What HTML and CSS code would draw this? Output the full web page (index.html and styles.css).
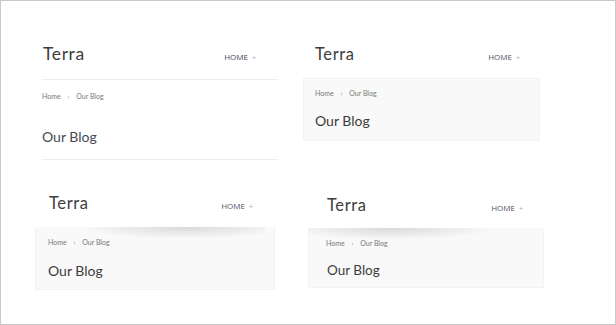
FILE: index.html
```html
<!DOCTYPE html>
<html lang="en">
<head>
    <meta charset="UTF-8">
    <meta name="viewport" content="width=device-width, initial-scale=1.0">
    <title>Terra - Page Title Styles</title>
    <link rel="stylesheet" href="styles.css">
</head>
<body>
    <div class="frame">
        <!-- style 1: plain with lines -->
        <div class="panel panel-lines">
            <div class="header">
                <span class="logo">Terra</span>
                <span class="nav">HOME <span class="plus">+</span></span>
            </div>
            <div class="title-box">
                <div class="crumbs">Home <span class="sep">›</span> Our Blog</div>
                <h2 class="page-title">Our Blog</h2>
            </div>
        </div>

        <!-- style 2: grey box -->
        <div class="panel panel-box">
            <div class="header">
                <span class="logo">Terra</span>
                <span class="nav">HOME <span class="plus">+</span></span>
            </div>
            <div class="title-box">
                <div class="crumbs">Home <span class="sep">›</span> Our Blog</div>
                <h2 class="page-title">Our Blog</h2>
            </div>
        </div>

        <!-- style 3: grey box, shadow right -->
        <div class="panel panel-shadow-r">
            <div class="header">
                <span class="logo">Terra</span>
                <span class="nav">HOME <span class="plus">+</span></span>
            </div>
            <div class="title-box">
                <div class="crumbs">Home <span class="sep">›</span> Our Blog</div>
                <h2 class="page-title">Our Blog</h2>
            </div>
        </div>

        <!-- style 4: grey box, shadow left -->
        <div class="panel panel-shadow-l">
            <div class="header">
                <span class="logo">Terra</span>
                <span class="nav">HOME <span class="plus">+</span></span>
            </div>
            <div class="title-box">
                <div class="crumbs">Home <span class="sep">›</span> Our Blog</div>
                <h2 class="page-title">Our Blog</h2>
            </div>
        </div>
    </div>
</body>
</html>
```

FILE: styles.css
```css
body {
    margin: 0;
    background: #fff;
    font-family: Lato, "Open Sans", sans-serif;
}
.frame {
    box-sizing: border-box;
    width: 616px;
    height: 325px;
    border: 1px solid #c9c9c9;
    display: grid;
    grid-template-columns: 298px 1fr;
    grid-template-rows: 164px 1fr;
    align-items: start;
}
.panel {
    position: relative;
}
.header {
    position: relative;
    display: flex;
    align-items: baseline;
    justify-content: space-between;
    background: #fff;
    z-index: 1;
}
.logo {
    font-size: 16.5px;
    line-height: 24px;
    color: #3d3d3d;
    letter-spacing: 0.6px;
}
.nav {
    font-family: "Open Sans", sans-serif;
    font-size: 8px;
    color: #50555f;
}
.plus {
    margin-left: 2px;
    color: #a8a8a8;
    font-size: 7px;
}
.title-box {
    background: #f9f9f9;
    border: 1px solid #f3f3f3;
    border-top: none;
}
.crumbs {
    font-size: 7px;
    line-height: 10px;
    color: #787878;
}
.sep {
    color: #a0a0a0;
    margin: 0 5px;
}
.page-title {
    margin: 0;
    font-size: 14px;
    line-height: 18px;
    font-weight: normal;
    color: #3c3c3c;
}

/* style 1 */
.panel-lines {
    width: 236px;
    margin: 41px 0 0 41px;
}
.panel-lines .header {
    height: 37px;
    padding-right: 22px;
    border-bottom: 1px solid #ededed;
}
.panel-lines .logo {
    font-size: 17.5px;
    padding-left: 1px;
}
.panel-lines .nav {
    color: #3f4859;
}
.panel-lines .title-box {
    background: none;
    border: none;
    border-bottom: 1px solid #ededed;
    padding: 11px 0 13px;
}
.panel-lines .page-title {
    margin-top: 27px;
    color: #444a52;
}

/* style 2 */
.panel-box {
    width: 237px;
    margin: 41px 0 0 4px;
}
.panel-box .header {
    height: 36px;
    padding: 0 20px 0 12px;
}
.panel-box .title-box {
    border-top: 1px solid #f1f1f1;
    padding: 9px 11px 10px;
}
.panel-box .page-title {
    margin-top: 14px;
}

/* style 3 */
.panel-shadow-r {
    width: 240px;
    margin: 26px 0 0 34px;
}
.panel-shadow-r .header {
    height: 36px;
    padding: 0 22px 0 14px;
}
.panel-shadow-r .header::after {
    content: "";
    position: absolute;
    top: 100%;
    left: 8%;
    width: 88%;
    height: 12px;
    background: radial-gradient(ellipse 50% 100% at 62% 0, rgba(0, 0, 0, 0.13), rgba(0, 0, 0, 0) 100%);
}
.panel-shadow-r .title-box {
    padding: 10px 12px 9px;
}
.panel-shadow-r .page-title {
    margin-top: 15px;
}

/* style 4 */
.panel-shadow-l {
    width: 236px;
    margin: 28px 0 0 9px;
}
.panel-shadow-l .header {
    height: 35px;
    padding: 0 21px 0 19px;
}
.panel-shadow-l .header::after {
    content: "";
    position: absolute;
    top: 100%;
    left: 0;
    width: 88%;
    height: 12px;
    background: radial-gradient(ellipse 50% 100% at 40% 0, rgba(0, 0, 0, 0.13), rgba(0, 0, 0, 0) 100%);
}
.panel-shadow-l .title-box {
    padding: 10px 17px 8px;
}
.panel-shadow-l .page-title {
    margin-top: 13px;
    font-size: 13.5px;
    padding-left: 1px;
}
```
